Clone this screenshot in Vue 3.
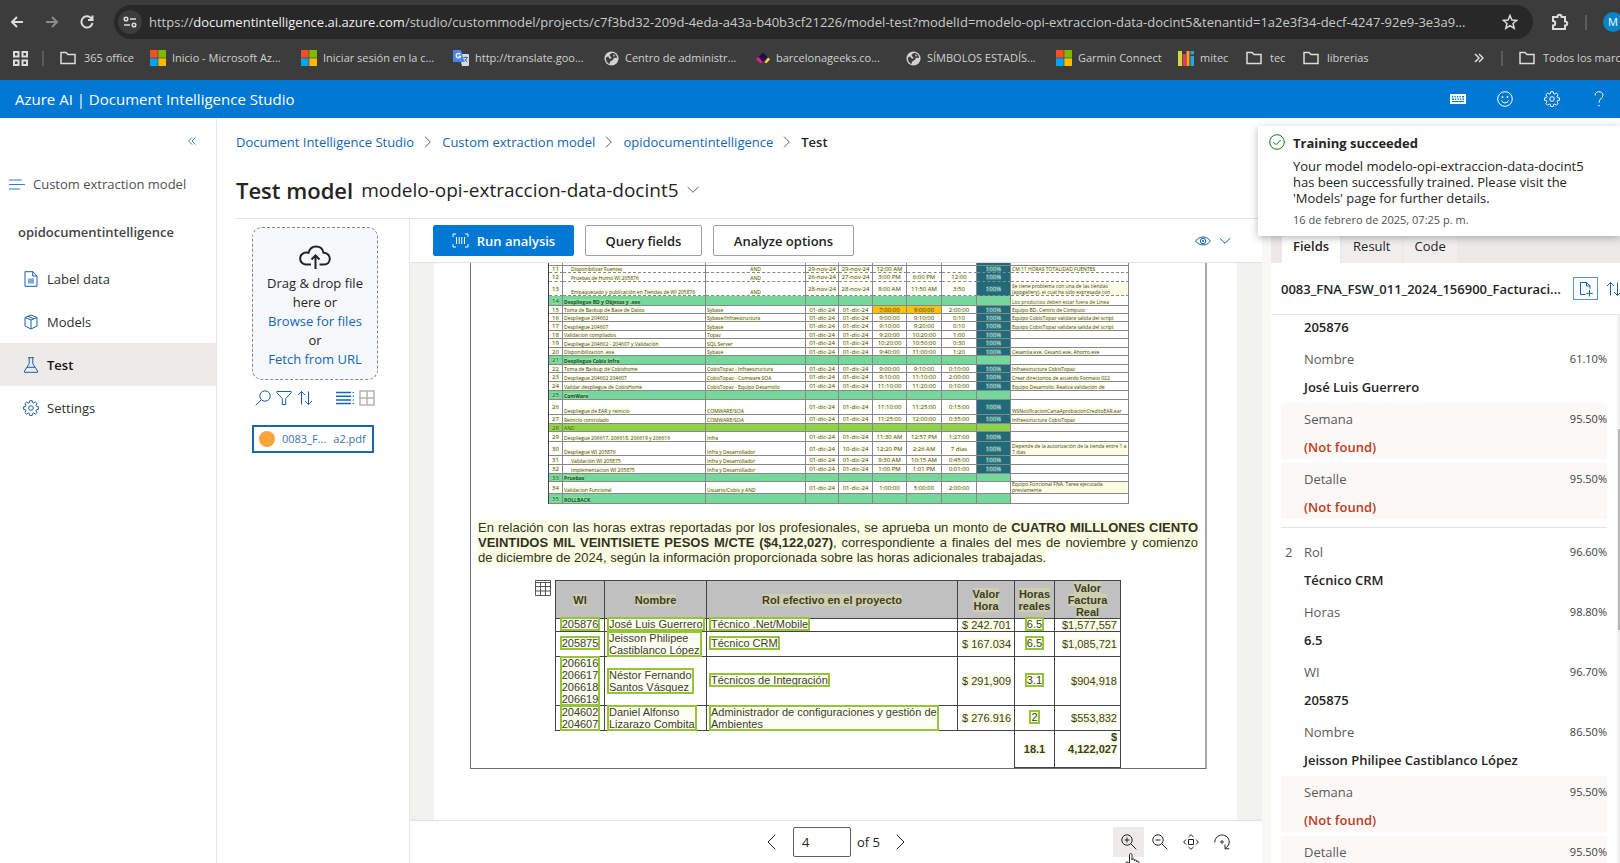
<script setup>
import { ref } from 'vue'

const url = {
  scheme: 'https://',
  host: 'documentintelligence.ai.azure.com',
  path: '/studio/custommodel/projects/c7f3bd32-209d-4eda-a43a-b40b3cf21226/model-test?modelId=modelo-opi-extraccion-data-docint5&tenantid=1a2e3f34-decf-4247-92e9-3e3a9...',
}

const bookmarks = [
  { icon: 'folder', label: '365 office', width: 90 },
  { icon: 'ms', label: 'Inicio - Microsoft Az...', width: 151 },
  { icon: 'ms', label: 'Iniciar sesión en la c...', width: 152 },
  { icon: 'translate', label: 'http://translate.goo...', width: 151 },
  { icon: 'globe', label: 'Centro de administr...', width: 151 },
  { icon: 'geeks', label: 'barcelonageeks.co...', width: 151 },
  { icon: 'globe', label: 'SÍMBOLOS ESTADÍS...', width: 150 },
  { icon: 'ms', label: 'Garmin Connect', width: 122 },
  { icon: 'mitec', label: 'mitec', width: 68 },
  { icon: 'folder', label: 'tec', width: 57 },
  { icon: 'folder', label: 'librerias', width: 80 },
]

const nav = [
  { icon: 'doc', label: 'Label data' },
  { icon: 'box', label: 'Models' },
  { icon: 'flask', label: 'Test', active: true },
  { icon: 'gear', label: 'Settings' },
]

const crumbs = ['Document Intelligence Studio', 'Custom extraction model', 'opidocumentintelligence']

const D = '01-dic-24'
const P = '100%'
const plan = [
  { n: '10', h: 3, c: ['', '', '', '', '', '', '', '', ''] },
  { n: '11', h: 7, c: ['Disponibilizar Fuentes', 'AND', '29-nov-24', '29-nov-24', '12:00 AM', '', '', P, 'CM 11 HORAS TOTALIDAD FUENTES'], indent: true, mid: true },
  { n: '12', h: 9, c: ['Pruebas de Humo WI 205876', 'AND', '26-nov-24', '27-nov-24', '3:00 PM', '6:00 PM', '12:00', P, ''], indent: true, mid: true },
  { n: '13', h: 14, c: ['Empaquetado y publicación en Tiendas de WI 205876', 'AND', '28-nov-24', '28-nov-24', '8:00 AM', '11:50 AM', '3:50', P, 'Se tiene problema con una de las tiendas (appgallery), el cual ha sido expresada con'], indent: true, mid: true },
  { n: '14', h: 10, kind: 'phase', c: ['Despliegue BD y Objetos y .exe', '', '', '', '', '', '', '', 'Los productos deben estar fuera de Linea'] },
  { n: '15', h: 8, c: ['Toma de Backup de Base de Datos', 'Sybase', D, D, '7:00:00', '9:00:00', '2:00:00', P, 'Equipo BD, Centro de Computo'], warn: true },
  { n: '16', h: 8, c: ['Despliegue 204602', 'Sybase/Infraestructura', D, D, '9:00:00', '9:10:00', '0:10', P, 'Equipo CobisTopaz validara salida del script'] },
  { n: '17', h: 9, c: ['Despliegue 204607', 'Sybase', D, D, '9:10:00', '9:20:00', '0:10', P, 'Equipo CobisTopaz validara salida del script'] },
  { n: '18', h: 8, c: ['Validacion compilados', 'Topaz', D, D, '9:20:00', '10:20:00', '1:00', P, ''] },
  { n: '19', h: 9, c: ['Despliegue 204602 - 204607 y Validación', 'SQL Server', D, D, '10:20:00', '10:50:00', '0:30', P, ''] },
  { n: '20', h: 8, c: ['Disponibilizacion .exe', 'Sybase', D, D, '9:40:00', '11:00:00', '1:20', P, 'Cesantia.exe, Cesanti.exe, Ahorro.exe'] },
  { n: '21', h: 9, kind: 'phase', c: ['Despliegue Cobis Infra', '', '', '', '', '', '', '', ''] },
  { n: '22', h: 8, c: ['Toma de Backup de Cobishome', 'CobisTopaz - Infraestructura', D, D, '9:00:00', '9:10:00', '0:10:00', P, 'Infraestructura CobisTopaz'] },
  { n: '23', h: 9, c: ['Despliegue 204602 204607', 'CobisTopaz - Comware SOA', D, D, '9:10:00', '11:10:00', '2:00:00', P, 'Crear directorios de acuerdo Formato 022'] },
  { n: '24', h: 9, c: ['Validar despliegue de CobisHome', 'CobisTopaz - Equipo Desarrollo', D, D, '11:10:00', '11:20:00', '0:10:00', P, 'Equipo Desarrollo. Realiza validación de'] },
  { n: '25', h: 9, kind: 'phase', c: ['ComWare', '', '', '', '', '', '', '', ''] },
  { n: '26', h: 15, c: ['Despliegue de EAR y reinicio', 'COMWARE/SOA', D, D, '11:10:00', '11:25:00', '0:15:00', P, 'WSNotificacionCartaAprobacionCreditoEAR.ear'] },
  { n: '27', h: 9, c: ['Reinicio controlado', 'COMWARE/SOA', D, D, '11:25:00', '12:00:00', '0:35:00', P, 'Infraestructura CobisTopaz'] },
  { n: '28', h: 8, kind: 'lime', c: ['AND', '', '', '', '', '', '', '', ''] },
  { n: '29', h: 10, c: ['Despliegue 206617, 206618, 206619 y 206616', 'Infra', D, D, '11:30 AM', '12:57 PM', '1:27:00', P, ''] },
  { n: '30', h: 14, c: ['Despliegue WI 205876', 'Infra y Desarrollador', D, '10-dic-24', '12:20 PM', '2:26 AM', '7 dias', P, 'Depende de la autorización de la tienda entre 1 a 7 días'] },
  { n: '31', h: 9, c: ['Validación WI 205875', 'Infra y Desarrollador', D, D, '9:30 AM', '10:15 AM', '0:45:00', P, ''], indent: true },
  { n: '32', h: 9, c: ['Implementacion WI 205875', 'Infra y Desarrollador', D, D, '1:00 PM', '1:01 PM', '0:01:00', P, ''], indent: true },
  { n: '33', h: 8, kind: 'phase', c: ['Pruebas', '', '', '', '', '', '', '', ''] },
  { n: '34', h: 12, kind: 'open', c: ['Validacion Funcional', 'Usuario/Cobis y AND', D, D, '1:00:00', '5:00:00', '2:00:00', '', 'Equipo Funcional FNA. Tarea ejecutada previamente'] },
  { n: '35', h: 10, kind: 'phase', c: ['ROLLBACK', '', '', '', '', '', '', '', ''] },
]
const planCols = [14, 143, 100, 33, 34, 34, 35, 35, 34, 118]

const people = [
  { h: 12, wi: ['205876'], name: ['José Luis Guerrero'], role: ['Técnico .Net/Mobile'], rate: '$ 242.701', hours: '6.5', total: '$1,577,557' },
  { h: 25, wi: ['205875'], name: ['Jeisson Philipee', 'Castiblanco López'], role: ['Técnico CRM'], rate: '$ 167.034', hours: '6.5', total: '$1,085,721' },
  { h: 49, wi: ['206616', '206617', '206618', '206619'], name: ['Néstor Fernando', 'Santos Vásquez'], role: ['Técnicos de Integración'], rate: '$ 291,909', hours: '3.1', total: '$904,918' },
  { h: 25, wi: ['204602', '204607'], name: ['Daniel Alfonso', 'Lizarazo Combita'], role: ['Administrador de configuraciones y gestión de', 'Ambientes'], rate: '$ 276.916', hours: '2', total: '$553,832' },
]

const groups = [
  {
    index: '',
    fields: [
      { value: '205876' },
      { label: 'Nombre', value: 'José Luis Guerrero', score: '61.10%' },
      { label: 'Semana', score: '95.50%' },
      { label: 'Detalle', score: '95.50%' },
    ],
  },
  {
    index: '2',
    fields: [
      { label: 'Rol', value: 'Técnico CRM', score: '96.60%' },
      { label: 'Horas', value: '6.5', score: '98.80%' },
      { label: 'WI', value: '205875', score: '96.70%' },
      { label: 'Nombre', value: 'Jeisson Philipee Castiblanco López', score: '86.50%' },
      { label: 'Semana', score: '95.50%' },
      { label: 'Detalle', score: '95.50%' },
    ],
  },
]

const tab = ref('Fields')
const page = ref('4')
</script>

<template>
  <div class="window">
    <div class="browser">
      <div class="address-row">
        <button class="ghost" aria-label="Back">
          <svg width="16" height="16" viewBox="0 0 16 16" class="ln bright"><path d="M14 8H3M8 3 3 8l5 5" /></svg>
        </button>
        <button class="ghost" aria-label="Forward">
          <svg width="16" height="16" viewBox="0 0 16 16" class="ln dim"><path d="M2 8h11M8 3l5 5-5 5" /></svg>
        </button>
        <button class="ghost" aria-label="Reload">
          <svg width="16" height="16" viewBox="0 0 16 16" class="ln bright"><path d="M13.500 9A5.600 5.600 0 1 1 12 4l1.500 1.500M13.500 1.500v4.500H9" /></svg>
        </button>
        <div class="omnibox">
          <button class="site-info" aria-label="Site information">
            <svg width="14" height="14" viewBox="0 0 14 14" class="ln bright thin"><circle cx="3" cy="4" r="1.800" /><path d="M7 4h6M1 10h6" /><circle cx="11" cy="10" r="1.800" /></svg>
          </button>
          <span class="url">{{ url.scheme }}<b>{{ url.host }}</b>{{ url.path }}</span>
          <button class="ghost" aria-label="Bookmark">
            <svg width="16" height="16" viewBox="0 0 16 16" class="ln bright thin"><path d="M8 1.500 9.900 6l4.800.4-3.700 3.100 1.200 4.800L8 11.700l-4.200 2.600L5 9.500 1.300 6.400 6.100 6z" /></svg>
          </button>
        </div>
        <button class="ghost ext" aria-label="Extensions">
          <svg width="18" height="18" viewBox="0 0 18 18" class="ln bright"><path d="M2 4h4.500c0-3 4-3 4 0H14v4.500c3 0 3 4 0 4V16H2v-3.500c3 0 3-4.500 0-4.500z" /></svg>
        </button>
        <i class="sep"></i>
        <button class="avatar" aria-label="Profile">M</button>
      </div>
      <nav class="bookmarks">
        <button class="ghost apps" aria-label="Apps">
          <svg width="15" height="15" viewBox="0 0 15 15" class="ln bright"><path d="M1 1h4.500v4.500H1zM9.500 1H14v4.500H9.500zM1 9.500h4.500V14H1zM9.500 9.500H14V14H9.500z" /></svg>
        </button>
        <i class="sep"></i>
        <a v-for="(b, i) in bookmarks" :key="i" href="#" class="bookmark" :class="b.icon" :style="{ width: b.width + 'px' }">
          <svg v-if="b.icon === 'folder'" width="16" height="16" viewBox="0 0 16 16" class="ln bright thin"><path d="M1 2.500h5l2 2h7v9H1z" /></svg>
          <svg v-else-if="b.icon === 'ms'" width="16" height="16" viewBox="0 0 16 16"><path fill="#f25022" d="M0 0h7.700v7.700H0z" /><path fill="#7fba00" d="M8.300 0H16v7.700H8.300z" /><path fill="#00a4ef" d="M0 8.300h7.700V16H0z" /><path fill="#ffb900" d="M8.300 8.300H16V16H8.300z" /></svg>
          <svg v-else-if="b.icon === 'translate'" width="16" height="16" viewBox="0 0 16 16"><path fill="#d5dbe6" d="M6 4h9a1 1 0 0 1 1 1v10a1 1 0 0 1-1 1H9z" /><path fill="#4a86e8" d="M1 0h7l3.500 12H1a1 1 0 0 1-1-1V1a1 1 0 0 1 1-1z" /><path fill="none" stroke="#fff" stroke-width="1.200" d="M7.300 4.300a2.300 2.300 0 1 0 .4 2H5.500" /><path fill="none" stroke="#4a6a9a" d="M10.500 7.500h4.500M12.800 6.500v1M14 7.500c-.5 2-1.500 3-2.500 4M11.800 9c.6 1.500 1.500 2.300 2.700 3" /></svg>
          <svg v-else-if="b.icon === 'globe'" width="15" height="15" viewBox="0 0 16 16"><circle cx="8" cy="8" r="7.500" fill="#d0d2d4" /><path fill="#3c3c3c" d="M8.500 2c-1 1-2.500 1-2.500 2.500S8 6 8 7.500 5 8 5 6.500 2 6.500 2 8c0 3 2.500 5.500 4 6 0-1.500 0-2 1-3s3-1 3-2.500 2-1.500 4-1c0-3.500-3-5.500-5.500-5.500zM10 3.500l2 1.500-2 1z" /></svg>
          <svg v-else-if="b.icon === 'geeks'" width="15" height="15" viewBox="0 0 16 16"><path fill="#e0218a" d="m1 9 3-3 5 5-3 2z" /><path fill="#ffd93b" d="m10 12 4-5 2 2-4 4z" /><path fill="#21094e" d="m8.500 1.500 5 5-5.500 5-4-5z" /></svg>
          <svg v-else width="16" height="15" viewBox="0 0 16 15"><path fill="#cddc39" d="M0 0h4v15H0z" /><path fill="#e23d5b" d="M4.500 3h3.500v12H4.500z" /><path fill="#ff9f1c" d="M8.500 0h3v15h-3z" /><path fill="#22a7e0" d="M12.500 5H16v10h-3.500zM12.500 0H16v3.500h-3.500z" /></svg>
          <span>{{ b.label }}</span>
        </a>
        <button class="ghost more" aria-label="More bookmarks">
          <svg width="10" height="10" viewBox="0 0 10 10" class="ln bright thin"><path d="m1 1 4 4-4 4M5 1l4 4-4 4" /></svg>
        </button>
        <i class="sep"></i>
        <a href="#" class="bookmark folder all">
          <svg width="16" height="16" viewBox="0 0 16 16" class="ln bright thin"><path d="M1 2.500h5l2 2h7v9H1z" /></svg>
          <span>Todos los marc</span>
        </a>
      </nav>
    </div>

    <header class="azure">
      <a href="#" class="brand">Azure AI | Document Intelligence Studio</a>
      <div class="azure-tools">
        <button aria-label="Keyboard shortcuts">
          <svg width="16" height="16" viewBox="0 0 16 16"><path fill="#fff" fill-rule="evenodd" d="M0 3h16v10H0zM2 5v1.500h1.200V5zm2.500 0v1.500h1.200V5zM7 5v1.500h1.200V5zm2.500 0v1.500h1.200V5zM12 5v1.500h2V5zM2 7.500V9h2V7.500zm3 0V9h1.200V7.500zm2.500 0V9h1.200V7.500zm2.500 0V9h1.200V7.500zm2.500 0V9H14V7.500zM2 10v1h12v-1z" /></svg>
        </button>
        <button aria-label="Feedback">
          <svg width="16" height="16" viewBox="0 0 16 16" class="ln"><circle cx="8" cy="8" r="7.300" /><path d="M4.500 9.500c1.500 3.200 5.500 3.200 7 0" /><circle cx="5.500" cy="6" r=".6" fill="#fff" /><circle cx="10.500" cy="6" r=".6" fill="#fff" /></svg>
        </button>
        <button aria-label="Settings">
          <svg width="16" height="16" viewBox="0 0 16 16" class="ln"><path d="M6.800.7h2.400l.4 1.900 1.200.5 1.600-1.100 1.700 1.700-1.100 1.600.5 1.200 1.900.4v2.400l-1.900.4-.5 1.200 1.100 1.600-1.700 1.700-1.600-1.100-1.200.5-.4 1.900H6.800l-.4-1.900-1.200-.5-1.600 1.100-1.700-1.700L3 10.900l-.5-1.200-1.900-.4V6.900l1.900-.4L3 5.300 1.900 3.700 3.600 2l1.600 1.100 1.200-.5z" /><circle cx="8" cy="8" r="2.300" /></svg>
        </button>
        <button aria-label="Help">
          <svg width="16" height="16" viewBox="0 0 16 16" class="ln"><path d="M4 4.500C4 2 5.800.7 8 .7s4 1.300 4 3.500c0 3-4 3.500-4 7.500" /><circle cx="8" cy="14.700" r=".4" /></svg>
        </button>
      </div>
    </header>

    <div class="body">
      <aside class="sidebar">
        <button class="collapse" aria-label="Collapse">
          <svg width="8" height="8" viewBox="0 0 8 8" class="ln blue"><path d="M4 .5.500 4 4 7.500M7.500.5 4 4l3.500 3.500" /></svg>
        </button>
        <div class="section">
          <svg width="16" height="11" viewBox="0 0 16 11" class="ln blue"><path d="M0 1h13M0 5.500h16M0 10h11" /></svg>
          <span>Custom extraction model</span>
        </div>
        <div class="project">opidocumentintelligence</div>
        <nav>
          <a v-for="n in nav" :key="n.label" href="#" class="nav-item" :class="{ active: n.active }">
            <svg v-if="n.icon === 'doc'" width="16" height="16" viewBox="0 0 16 16" class="ln navy"><path d="M2 .7h8L14 5v10.300H2zM9.700.7V5H14" /><path d="M5 7.500h6v5H5z" fill="#7ba7d9" stroke="none" /></svg>
            <svg v-else-if="n.icon === 'box'" width="16" height="16" viewBox="0 0 16 16" class="ln navy"><path d="m8 1 6 2.500v8.500l-6 3-6-3V3.500zM2 3.500 8 6l6-2.500M8 6v9M5 2.300l6 2.500" /></svg>
            <svg v-else-if="n.icon === 'flask'" width="16" height="16" viewBox="0 0 16 16" class="ln navy"><path d="M5 .7h6M6.200.7v6L1.500 14v1.300h13V14L9.800 6.700v-6M4 10.300h8" /></svg>
            <svg v-else width="16" height="16" viewBox="0 0 16 16" class="ln navy"><path d="M6.800.7h2.400l.4 1.900 1.200.5 1.600-1.100 1.700 1.700-1.100 1.600.5 1.200 1.900.4v2.400l-1.900.4-.5 1.200 1.100 1.600-1.700 1.700-1.600-1.100-1.200.5-.4 1.900H6.800l-.4-1.900-1.200-.5-1.600 1.100-1.700-1.700L3 10.900l-.5-1.200-1.900-.4V6.900l1.900-.4L3 5.300 1.900 3.700 3.600 2l1.600 1.100 1.200-.5z" /><circle cx="8" cy="8" r="2.300" /></svg>
            <span>{{ n.label }}</span>
          </a>
        </nav>
      </aside>

      <main class="main">
        <nav class="crumbs">
          <template v-for="c in crumbs" :key="c">
            <a href="#">{{ c }}</a>
            <svg width="8" height="12" viewBox="0 0 8 12" class="ln gray"><path d="m1 .700 5.300 5.300L1 11.300" /></svg>
          </template>
          <span>Test</span>
        </nav>
        <div class="title-row">
          <h1>Test model</h1>
          <button class="model">modelo-opi-extraccion-data-docint5
            <svg width="12" height="8" viewBox="0 0 12 8" class="ln gray"><path d="m.7 1 5.300 5.300L11.300 1" /></svg>
          </button>
        </div>

        <div class="work">
          <section class="files">
            <div class="drop">
              <svg width="32" height="26" viewBox="0 0 32 26" class="ln dark thick"><path d="M12 19.500H7.500a6 6 0 0 1-.7-12c1-.2 2 0 2.700.3C10.500 4 13.500 1.500 17 1.500c4 0 6.800 2.700 7.500 6.300 3.500 0 6.300 2.500 6.300 6s-2.600 5.700-5.800 5.700h-4.500M16.500 24V10.500M12.500 14.500l4-4 4 4" /></svg>
              <span>Drag &amp; drop file<br />here or</span>
              <a href="#">Browse for files</a>
              <span>or</span>
              <a href="#">Fetch from URL</a>
            </div>
            <div class="file-tools">
              <button aria-label="Search"><svg width="16" height="16" viewBox="0 0 16 16" class="ln navy"><circle cx="10" cy="6" r="5.200" /><path d="M6.300 9.700.700 15.300" /></svg></button>
              <button aria-label="Filter"><svg width="16" height="16" viewBox="0 0 16 16" class="ln navy"><path d="M.8 1.500h14.400v1.300L9.700 8.500v6H6.300v-6L.8 2.800z" /></svg></button>
              <button aria-label="Sort"><svg width="16" height="16" viewBox="0 0 16 16" class="ln navy"><path d="M4.500 14.500v-13M1 5l3.500-3.500L8 5M11.500 1.500v13M8 11l3.500 3.500L15 11" /></svg></button>
              <button aria-label="List view" class="push"><svg width="18" height="14" viewBox="0 0 18 14" class="ln azureln"><path d="M0 1.500h15M0 5.200h15M0 8.900h15M0 12.500h15" /><path d="M17.300 1v12" stroke-dasharray="1 2.700" /></svg></button>
              <button aria-label="Grid view"><svg width="16" height="16" viewBox="0 0 16 16" class="ln pale"><path d="M1 1h14v14H1zM8 1v14M1 8h14" /></svg></button>
            </div>
            <button class="file"><i></i><span>0083_F...</span><span>a2.pdf</span></button>
          </section>

          <section class="viewer">
            <div class="commands">
              <button class="btn primary">
                <svg width="17" height="15" viewBox="0 0 17 15" class="ln"><path d="M4 1H1v3M13 1h3v3M4 14H1v-3M13 14h3v-3M4.500 4v7M7.200 4v7M9.800 4v7M12.500 4v7" /></svg>
                Run analysis
              </button>
              <button class="btn query">Query fields</button>
              <button class="btn">Analyze options</button>
              <button class="visibility" aria-label="Visibility">
                <svg width="16" height="10" viewBox="0 0 16 10" class="ln navy"><path d="M.7 5C4-.3 12-.3 15.300 5 12 10.300 4 10.300.7 5z" /><circle cx="8" cy="5" r="2.700" /><circle cx="8" cy="5" r=".8" /></svg>
                <svg width="12" height="8" viewBox="0 0 12 8" class="ln navy"><path d="m.7 1 5.300 5.300L11.300 1" /></svg>
              </button>
            </div>
            <div class="canvas">
              <div class="sheet">
                <div class="frame">
                  <table class="plan">
                    <colgroup><col v-for="(w, i) in planCols" :key="i" :style="{ width: w + 'px' }" /></colgroup>
                    <tbody>
                      <tr v-for="r in plan" :key="r.n" :class="[r.kind, { indent: r.indent, mid: r.mid, warn: r.warn }]">
                        <td><div :style="{ height: r.h - 1 + 'px' }"><span v-if="r.h > 3">{{ r.n }}</span></div></td>
                        <td v-for="(t, i) in r.c" :key="i"><div :style="{ height: r.h - 1 + 'px' }"><span>{{ t }}</span></div></td>
                      </tr>
                    </tbody>
                  </table>
                  <p class="para"><mark>En relación con las horas extras reportadas por los profesionales, se aprueba un monto de <b>CUATRO MILLLONES CIENTO VEINTIDOS MIL VEINTISIETE PESOS M/CTE ($4,122,027)</b>, correspondiente a finales del mes de noviembre y comienzo de diciembre de 2024, según la información proporcionada sobre las horas adicionales trabajadas.</mark></p>
                  <div class="cost-wrap">
                    <svg width="16" height="16" viewBox="0 0 16 16" class="ln grid"><path d="M.5.500h15v15H.5zM.5 2.500h15M.5 6.500h15M.5 11h15M5.500 2.500v13M10.500 2.500v13" /></svg>
                    <table class="cost">
                      <colgroup><col class="c1" /><col class="c2" /><col class="c3" /><col class="c4" /><col class="c5" /><col class="c6" /></colgroup>
                      <thead>
                        <tr>
                          <th><mark>WI</mark></th><th><mark>Nombre</mark></th><th><mark>Rol efectivo en el proyecto</mark></th>
                          <th><mark>Valor<br />Hora</mark></th><th><mark>Horas<br />reales</mark></th><th><mark>Valor<br />Factura<br />Real</mark></th>
                        </tr>
                      </thead>
                      <tbody>
                        <tr v-for="p in people" :key="p.total" :style="{ height: p.h + 'px' }">
                          <td class="center"><span class="box"><template v-for="(l, i) in p.wi" :key="l"><br v-if="i" />{{ l }}</template></span></td>
                          <td><span class="box"><template v-for="(l, i) in p.name" :key="l"><br v-if="i" />{{ l }}</template></span></td>
                          <td><span class="box"><template v-for="(l, i) in p.role" :key="l"><br v-if="i" />{{ l }}</template></span></td>
                          <td class="right"><mark>{{ p.rate }}</mark></td>
                          <td class="center"><span class="box">{{ p.hours }}</span></td>
                          <td class="right"><mark>{{ p.total }}</mark></td>
                        </tr>
                        <tr class="sum">
                          <td colspan="4"></td>
                          <td class="center"><mark>18.1</mark></td>
                          <td class="right"><mark>$<br />4,122,027</mark></td>
                        </tr>
                      </tbody>
                    </table>
                  </div>
                </div>
              </div>
            </div>
            <div class="pager">
              <button aria-label="Previous page"><svg width="9" height="16" viewBox="0 0 9 16" class="ln dark"><path d="M8.300.700 1 8l7.300 7.300" /></svg></button>
              <input v-model="page" aria-label="Page number" />
              <span>of 5</span>
              <button aria-label="Next page"><svg width="9" height="16" viewBox="0 0 9 16" class="ln dark"><path d="M.7.700 8 8 .7 15.300" /></svg></button>
              <div class="zoom-tools">
                <button class="hot" aria-label="Zoom in">
                  <svg width="16" height="16" viewBox="0 0 16 16" class="ln dark"><circle cx="6" cy="6" r="5.200" /><path d="m9.700 9.700 5.600 5.600M3.500 6h5M6 3.500v5" /></svg>
                  <svg class="cursor" width="15" height="18" viewBox="0 0 15 18"><path fill="#fff" stroke="#222" d="M4.500 11V2c0-2 2.500-2 2.500 0v5c0-1.500 2.500-1.500 2.500 0v1c0-1.500 2.300-1.300 2.300.2V9c0-1.300 2.200-1.200 2.200.5V13c0 3-1.500 4.500-4.500 4.500S5 16 3.500 14L1 10.500C.3 9 2.500 8.500 3.200 9.500z" /></svg>
                </button>
                <button aria-label="Zoom out"><svg width="16" height="16" viewBox="0 0 16 16" class="ln dark"><circle cx="6" cy="6" r="5.200" /><path d="m9.700 9.700 5.600 5.600M3.500 6h5" /></svg></button>
                <button aria-label="Fit page"><svg width="16" height="16" viewBox="0 0 16 16" class="ln dark"><path d="M5.500 5.500h5v5h-5zM5.500 3 8 .7 10.500 3M5.500 13 8 15.300l2.500-2.300M3 5.500.7 8 3 10.500M13 5.500 15.300 8 13 10.500" /></svg></button>
                <button aria-label="Rotate"><svg width="16" height="16" viewBox="0 0 16 16" class="ln dark"><path d="M.8 8.500C.8 4 4 1 8 1s7.200 3 7.200 7c0 3-1.700 5-4.200 6.500M11 10.500v4.300h4.300" /><circle cx="8" cy="8" r="1.200" /></svg></button>
              </div>
            </div>
          </section>

          <section class="results">
            <div class="tabs" role="tablist">
              <button v-for="t in ['Fields', 'Result', 'Code']" :key="t" role="tab" :aria-selected="tab === t" :class="{ on: tab === t }" @click="tab = t">{{ t }}</button>
            </div>
            <div class="doc-head">
              <h2>0083_FNA_FSW_011_2024_156900_Facturaci...</h2>
              <button class="add" aria-label="Add file"><svg width="16" height="16" viewBox="0 0 16 16" class="ln navy"><path d="M7.500 13.500h-5v-12h6.300L12 4.800V8M8.500 1.500V5H12M11.500 9v6.500M8.300 12.300h6.500" /></svg></button>
              <button class="plain" aria-label="Sort fields"><svg width="16" height="16" viewBox="0 0 16 16" class="ln navy"><path d="M4.500 14.500v-13M1 5l3.500-3.500L8 5M11.500 1.500v13M8 11l3.500 3.500L15 11" /></svg></button>
            </div>
            <div class="scroll">
              <div v-for="(g, gi) in groups" :key="gi" class="group">
                <div v-for="(f, i) in g.fields" :key="i" class="field" :class="{ missing: !f.value, bare: !f.label }">
                  <div v-if="f.label" class="line">
                    <span class="idx">{{ i === 0 ? g.index : '' }}</span>
                    <span class="label">{{ f.label }}</span>
                    <span class="score">{{ f.score }}</span>
                  </div>
                  <div class="value">{{ f.value || '(Not found)' }}</div>
                </div>
              </div>
              <i class="track"><i></i></i>
            </div>
          </section>
        </div>
      </main>

      <div class="toast" role="status">
        <svg width="16" height="16" viewBox="0 0 16 16" class="ln green"><circle cx="8" cy="8" r="7.300" /><path d="m4.500 8.200 2.500 2.500L11.700 6" /></svg>
        <div>
          <strong>Training succeeded</strong>
          <p>Your model modelo-opi-extraccion-data-docint5<br />has been successfully trained. Please visit the<br />'Models' page for further details.</p>
          <small>16 de febrero de 2025, 07:25 p. m.</small>
        </div>
      </div>
    </div>
  </div>
</template>

<style>
body {
  overflow: hidden;
}
</style>

<style scoped>
.window {
  height: 100vh;
  display: flex;
  flex-direction: column;
  overflow: hidden;
  background: #fff;
  color: #242424;
  font: 13px/20px "Open Sans", "Noto Sans", sans-serif;
}
.window * { box-sizing: border-box; }
button { padding: 0; border: 0; background: none; color: inherit; font: inherit; }
a { color: #1267b4; text-decoration: none; }
svg { display: block; flex: none; }
mark { background: #fafde2; color: inherit; }
.ln { fill: none; stroke: #fff; stroke-width: 1; }
.bright { stroke: #dcdcdc; stroke-width: 2; }
.thin { stroke-width: 1.500; }
.dim { stroke: #8c8c8c; stroke-width: 2; }
.blue { stroke: #2f7fc4; }
.navy { stroke: #1560ac; }
.gray { stroke: #605e5c; }
.dark { stroke: #222; }
.thick { stroke-width: 2; }
.azureln { stroke: #1268b8; stroke-width: 1.500; }
.pale { stroke: #b4b4b4; stroke-width: 1.500; }
.green { stroke: #107c10; }
.grid { stroke: #555; }

.browser { flex: none; background: #3c3c3c; color: #d8d8d8; }
.address-row { display: flex; align-items: center; height: 44px; padding-left: 9px; }
.ghost { display: grid; place-items: center; flex: none; width: 16px; height: 24px; margin-right: 19px; }
.omnibox { flex: 1 1 0; min-width: 0; display: flex; align-items: center; height: 34px; margin-right: 18px; padding: 0 0 0 4px; border-radius: 17px; background: #282828; }
.site-info { display: grid; place-items: center; flex: none; width: 24px; height: 24px; margin-right: 7px; border-radius: 12px; background: #3c3c3c; }
.url { flex: 1; min-width: 0; overflow: hidden; white-space: nowrap; color: #c8cac8; }
.url b { font-weight: 400; color: #f0f0f0; }
.omnibox .ghost { margin: 0 15px 0 8px; }
.ghost.ext { width: 18px; margin-right: 16px; }
.sep { flex: none; width: 2px; height: 15px; background: #5c5c5c; }
.avatar { flex: none; width: 20px; height: 20px; margin: 0 -3px 0 16px; border-radius: 10px; background: #0a84c8; color: #fff; font-size: 11px; }
.bookmarks { display: flex; align-items: center; height: 36px; padding-left: 12px; padding-bottom: 8px; }
.ghost.apps { margin-right: 14px; }
.bookmarks .sep { margin-right: 16px; }
.bookmark { display: flex; align-items: center; gap: 6px; flex: none; color: #cfd2cf; font-size: 11px; white-space: nowrap; }
.bookmark.folder { gap: 8px; }
.ghost.more { width: 10px; margin: 0 17px 0 auto; }
.bookmark.all { width: 101px; }

.azure { flex: none; display: flex; align-items: center; justify-content: space-between; height: 38px; padding: 0 13px 0 15px; background: #0078d4; }
.brand { color: #fff; font-size: 15px; }
.azure-tools { display: flex; gap: 31px; }

.body { position: relative; flex: 1; min-height: 0; display: flex; }
.sidebar { flex: none; width: 217px; border-right: 1px solid #e6e6e6; }
.collapse { display: block; margin: 19px 20px 0 auto; }
.section { display: flex; align-items: center; gap: 8px; margin-top: 29px; padding-left: 9px; color: #505050; }
.project { margin: 28px 0 15px 18px; color: #444; font-weight: 600; }
.nav-item { display: flex; align-items: center; gap: 8px; height: 43px; padding-left: 23px; color: #303030; }
.nav-item.active { background: #edebe9; color: #111; font-weight: 600; }

.main { flex: 1; min-width: 0; display: flex; flex-direction: column; }
.crumbs { display: flex; align-items: center; gap: 10px; padding: 14px 0 0 19px; }
.crumbs span { font-weight: 600; }
.title-row { display: flex; align-items: center; gap: 8px; height: 66px; padding: 10px 0 0 19px; }
h1 { margin: 0; font-size: 22px; line-height: 30px; font-weight: 600; }
.model { display: flex; align-items: center; gap: 8px; font-size: 19px; line-height: 30px; }
.work { position: relative; flex: 1; min-height: 0; display: flex; }
.work::before { content: ""; position: absolute; top: 0; left: 19px; right: 0; height: 1px; background: #e4e4e4; }

.files { flex: none; width: 193px; padding: 9px 0 0 35px; border-right: 1px solid #e6e6e6; }
.drop { display: flex; flex-direction: column; align-items: center; width: 126px; height: 153px; padding-top: 17px; border: 1px dashed #8a8886; border-radius: 10px; background: #f6f8fb; text-align: center; line-height: 19px; }
.drop svg { margin-bottom: 3px; }
.file-tools { display: flex; align-items: center; gap: 5px; width: 126px; height: 16px; margin-top: 10px; padding-left: 3px; }
.push { margin-left: 18px; }
.file { display: flex; align-items: center; gap: 7px; width: 122px; height: 28px; margin-top: 19px; padding-left: 5px; border: 2px solid #1766ae; background: #fff; color: #3b76ac; font-size: 11px; }
.file i { flex: none; width: 16px; height: 16px; border-radius: 8px; background: #faa43a; }

.viewer { flex: 1; min-width: 0; display: flex; flex-direction: column; }
.commands { flex: none; display: flex; align-items: center; gap: 11px; height: 45px; padding: 1px 31px 0 23px; border-bottom: 1px solid #e2e2e2; }
.btn { display: flex; align-items: center; justify-content: center; gap: 8px; width: 141px; height: 31px; border: 1px solid #a19f9d; border-radius: 2px; background: #fff; font-weight: 600; }
.btn.query { width: 117px; }
.btn.primary { border-color: #0078d4; background: #0078d4; color: #fff; }
.visibility { display: flex; align-items: center; gap: 8px; margin-left: auto; }

.canvas { flex: 1; min-height: 0; overflow: hidden; display: flex; align-items: stretch; padding: 0 25px 0 24px; background: #f2f2f1; }
.sheet { flex: 1; min-width: 0; padding: 0 30px 0 36px; background: #fff; }
.frame { padding: 0 7px; border: solid #6f6f6f; border-width: 0 2px 1px 1px; border-right-color: #a8a8a8; }
table { border-collapse: separate; border-spacing: 0; table-layout: fixed; }
.plan { width: 580px; margin: 0 auto 0 70px; border-left: 1px solid #444; color: #44441f; font-size: 5px; line-height: 6px; }
.plan td { padding: 0; border: solid #888; border-width: 0 1px 1px 0; }
.plan td > div { display: flex; align-items: flex-end; overflow: hidden; padding: 0 1px; }
.plan td span { background: #fafde2; }
.plan td:nth-child(2) { white-space: nowrap; }
.plan .indent td:nth-child(2) div { padding-left: 8px; }
.plan td:first-child div, .plan td:nth-child(n + 4):nth-child(-n + 9) div { justify-content: center; align-items: center; white-space: nowrap; font-size: 6px; }
.plan .mid td:nth-child(3) div { justify-content: center; }
.plan .mid td { border-bottom-style: dashed; }
.plan td:nth-child(9) { background: #206a7a; color: #d8f0e0; }
.plan td:nth-child(9) span { background: #3d8088; }
.plan .phase td { background: #76d79c; color: #14502c; font-weight: 700; }
.plan .phase td:first-child, .plan .lime td:first-child { font-weight: 400; }
.plan .phase td:last-child { background: #fff; color: #50502c; font-weight: 400; }
.plan .lime td { background: #8fd14a; color: #2c5010; }
.plan .lime td:last-child { background: #fff; }
.plan .open td:nth-child(9) { background: #fff; }
.plan .phase td:nth-child(-n + 9) span { background: #8fde9c; }
.plan .lime td:nth-child(n) span { background: #a0d850; }
.plan .warn td:nth-child(6), .plan .warn td:nth-child(7) { background: #ffc000; }
.plan .warn td:nth-child(6) span, .plan .warn td:nth-child(7) span { background: #f4bc10; }

.para { margin: 16px 0 0; color: #32321e; font: 13px/15px "Liberation Sans", Arial, sans-serif; text-align: justify; }
.cost-wrap { display: flex; gap: 4px; margin: 15px 0 0 57px; color: #3c3c28; font: 11px/12px "Liberation Sans", Arial, sans-serif; }
.cost { width: 566px; border-top: 1px solid #444; }
.c1 { width: 50px; }
.c2 { width: 102px; }
.c3 { width: 251px; }
.c4 { width: 57px; }
.c5 { width: 40px; }
.c6 { width: 66px; }
.cost th, .cost td { padding: 0 3px; border: solid #444; border-width: 0 1px 1px 0; text-align: left; white-space: nowrap; }
.cost th { height: 38px; padding: 0; background: #c0c0c0; text-align: center; }
.cost th:first-child, .cost td:first-child { border-left-width: 1px; }
.cost th mark { background: #cdcfae; }
.cost .center { padding: 0; text-align: center; }
.cost .right { padding-left: 0; text-align: right; }
.cost .box { display: inline-block; margin: -1px 0; padding: 0 1px; outline: 2px solid #93c535; outline-offset: -1px; background: #fdfef2; vertical-align: top; }
.cost .sum td { height: 37px; font-weight: 700; }
.cost .sum td:first-child { border-bottom: 0; border-left: 0; }
.cost .sum .right { vertical-align: top; }

.pager { position: relative; flex: none; display: flex; align-items: center; height: 43px; padding-left: 357px; border-top: 1px solid #e2e2e2; }
.pager input { width: 58px; height: 30px; margin: 0 6px 0 17px; padding: 0 8px; border: 1px solid #605e5c; border-radius: 2px; background: #fff; color: inherit; font: inherit; }
.pager span { margin-right: 16px; }
.zoom-tools { display: flex; margin: 0 25px 0 auto; }
.zoom-tools button { position: relative; display: grid; place-items: center; width: 31px; height: 30px; }
.zoom-tools .hot { background: #edebe9; }
.zoom-tools .cursor { position: absolute; top: 26px; left: 12px; }

.results { flex: none; width: 358px; display: flex; flex-direction: column; border-left: 9px solid #f8f8f7; }
.tabs { flex: none; display: flex; align-items: flex-end; gap: 2px; height: 45px; padding-left: 11px; background: #ebeae9; }
.tabs button { height: 35px; padding: 0 11px; background: #f0efee; }
.tabs .on { background: #fff; font-weight: 600; }
.doc-head { flex: none; display: flex; align-items: center; height: 52px; padding-left: 10px; border-bottom: 1px solid #e8e8e8; }
.doc-head h2 { flex: none; width: 292px; margin: 0; white-space: nowrap; font-size: 13px; line-height: 20px; font-weight: 600; }
.add { display: grid; place-items: center; flex: none; width: 25px; height: 23px; border: 1px solid #5a94cc; }
.plain { flex: none; margin-left: 8px; }
.scroll { position: relative; flex: 1; min-height: 0; overflow: hidden; padding: 0 13px 0 10px; }
.group + .group { margin-top: 8px; padding-top: 8px; border-top: 1px solid #e2e2e2; }
.field { height: 56px; margin-bottom: 4px; padding-top: 4px; }
.group .field:last-child { margin-bottom: 0; }
.field.bare { height: 24px; padding: 0; }
.field.bare .value { margin-top: 0; }
.field.missing { background: #faf9f8; }
.line { display: flex; line-height: 24px; color: #5c5a58; }
.idx { width: 23px; padding-left: 4px; }
.score { margin-left: auto; font-size: 11px; color: #404040; }
.value { margin: 4px 0 0 23px; line-height: 24px; font-weight: 600; }
.missing .value { color: #c03a18; }
.track { position: absolute; top: 0; right: 0; bottom: 0; width: 3px; background: #f1f1f1; }
.track i { position: absolute; top: 114px; right: 0; width: 2px; height: 201px; background: #b8b8b8; }

.toast { position: absolute; top: 8px; right: 0; display: flex; gap: 8px; width: 362px; height: 110px; padding: 8px 0 0 11px; background: #fff; box-shadow: 0 2px 8px rgba(0, 0, 0, 0.28); }
.toast strong { display: block; font-weight: 700; line-height: 18px; }
.toast p { margin: 6px 0 6px; font-size: 13px; line-height: 16px; }
.toast small { display: block; font-size: 11px; line-height: 16px; color: #505050; }
</style>
